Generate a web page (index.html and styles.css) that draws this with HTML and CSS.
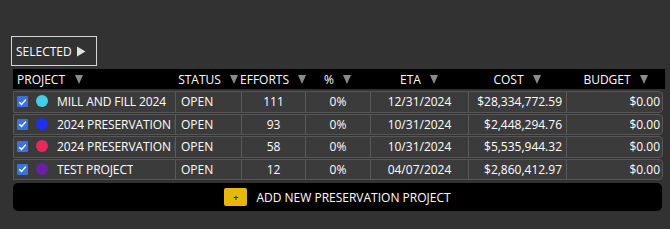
FILE: index.html
```html
<!DOCTYPE html>
<html lang="en">
<head>
  <meta charset="UTF-8">
  <meta name="viewport" content="width=device-width, initial-scale=1.0">
  <title>Preservation Projects</title>
  <link rel="stylesheet" href="styles.css">
</head>
<body>

<div class="page">
  <button class="selected-btn">SELECTED
    <svg width="10" height="11" viewBox="0 0 10 11"><path d="M1 0.5 L9.5 5.5 L1 10.5 Z" fill="#e2e2e2"/></svg>
  </button>

  <div class="grid-head">
    <div class="hcell left">PROJECT <span class="arrow"></span></div>
    <div class="hcell">STATUS <span class="arrow"></span></div>
    <div class="hcell">EFFORTS <span class="arrow"></span></div>
    <div class="hcell">% <span class="arrow"></span></div>
    <div class="hcell">ETA <span class="arrow"></span></div>
    <div class="hcell">COST <span class="arrow"></span></div>
    <div class="hcell">BUDGET <span class="arrow"></span></div>
  </div>

  <div class="grid-row">
    <div class="cell project"><span class="check"><svg width="12" height="12" viewBox="0 0 12 12"><path d="M2.5 6.2 L5 8.6 L9.6 3.4" stroke="#fff" stroke-width="1.6" fill="none"/></svg></span><span class="dot cyan"></span><span class="name">MILL AND FILL 2024</span></div>
    <div class="cell">OPEN</div>
    <div class="cell center">111</div>
    <div class="cell center">0%</div>
    <div class="cell center">12/31/2024</div>
    <div class="cell right">$28,334,772.59</div>
    <div class="cell right">$0.00</div>
  </div>

  <div class="grid-row">
    <div class="cell project"><span class="check"><svg width="12" height="12" viewBox="0 0 12 12"><path d="M2.5 6.2 L5 8.6 L9.6 3.4" stroke="#fff" stroke-width="1.6" fill="none"/></svg></span><span class="dot blue"></span><span class="name">2024 PRESERVATION PROJECT</span></div>
    <div class="cell">OPEN</div>
    <div class="cell center">93</div>
    <div class="cell center">0%</div>
    <div class="cell center">10/31/2024</div>
    <div class="cell right">$2,448,294.76</div>
    <div class="cell right">$0.00</div>
  </div>

  <div class="grid-row">
    <div class="cell project"><span class="check"><svg width="12" height="12" viewBox="0 0 12 12"><path d="M2.5 6.2 L5 8.6 L9.6 3.4" stroke="#fff" stroke-width="1.6" fill="none"/></svg></span><span class="dot pink"></span><span class="name">2024 PRESERVATION PROJECT</span></div>
    <div class="cell">OPEN</div>
    <div class="cell center">58</div>
    <div class="cell center">0%</div>
    <div class="cell center">10/31/2024</div>
    <div class="cell right">$5,535,944.32</div>
    <div class="cell right">$0.00</div>
  </div>

  <div class="grid-row">
    <div class="cell project"><span class="check"><svg width="12" height="12" viewBox="0 0 12 12"><path d="M2.5 6.2 L5 8.6 L9.6 3.4" stroke="#fff" stroke-width="1.6" fill="none"/></svg></span><span class="dot purple"></span><span class="name">TEST PROJECT</span></div>
    <div class="cell">OPEN</div>
    <div class="cell center">12</div>
    <div class="cell center">0%</div>
    <div class="cell center">04/07/2024</div>
    <div class="cell right">$2,860,412.97</div>
    <div class="cell right">$0.00</div>
  </div>

  <button class="add-btn"><span class="plus">+</span>ADD NEW PRESERVATION PROJECT</button>
</div>

</body>
</html>
```

FILE: styles.css
```css
body {
  margin: 0;
  padding: 0;
  background-color: #323232;
  color: #fff;
  font-family: "Open Sans", Arial, sans-serif;
  font-size: 12px;
}
.page {
  padding: 36px 0 0 11px;
}
.selected-btn {
  display: flex;
  align-items: center;
  gap: 4px;
  box-sizing: border-box;
  width: 86px;
  height: 30px;
  padding: 0 0 0 4px;
  background: transparent;
  border: 1px solid #d6d6d6;
  color: #fff;
  font-family: inherit;
  font-size: 12px;
}
/* Cabecera de la tabla */
.grid-head {
  display: grid;
  grid-template-columns: 162px 66px 64px 65px 98px 98px 99px;
  width: 652px;
  height: 20px;
  margin: 3px 0 0 2px;
  background-color: #000;
}
.hcell {
  display: flex;
  align-items: center;
  justify-content: center;
  gap: 9px;
  white-space: nowrap;
}
.hcell.left {
  justify-content: flex-start;
  padding-left: 4px;
  gap: 10px;
}
.arrow {
  width: 0;
  height: 0;
  border-left: 4.5px solid transparent;
  border-right: 4.5px solid transparent;
  border-top: 9px solid #8a8a8a;
}
/* Filas */
.grid-row {
  display: grid;
  grid-template-columns: 162px 66px 64px 65px 98px 98px 97px;
  box-sizing: border-box;
  width: 650px;
  height: 21.5px;
  margin: 1px 0 0 2px;
  background-color: #3b3b3b;
  border: 1px solid #565656;
  border-radius: 0 4px 4px 0;
}
.grid-head + .grid-row {
  margin-top: 2px;
}
.cell {
  display: flex;
  align-items: center;
  padding: 0 5px;
  border-right: 1px solid #5a5a5a;
  white-space: nowrap;
  overflow: hidden;
}
.cell:last-child {
  border-right: none;
}
.cell.center {
  justify-content: center;
}
.cell.right {
  justify-content: flex-end;
  padding-right: 4px;
}
.cell.project {
  padding-left: 3px;
  padding-right: 0;
}
.check {
  display: flex;
  flex: none;
  width: 11px;
  height: 11px;
  margin-right: 8px;
  background-color: #3a72dc;
  border-radius: 1px;
  align-items: center;
  justify-content: center;
}
.dot {
  flex: none;
  width: 12px;
  height: 12px;
  border-radius: 50%;
  margin-right: 9px;
  margin-top: -1px;
}
.dot.cyan { background-color: #3fcfe6; }
.dot.blue { background-color: #1f2ff0; }
.dot.pink { background-color: #e8275c; }
.dot.purple { background-color: #6a1ea8; }
.name {
  min-width: 0;
  overflow: hidden;
  text-overflow: clip;
  letter-spacing: -0.1px;
}
.add-btn {
  display: flex;
  align-items: center;
  justify-content: center;
  gap: 9px;
  width: 649px;
  height: 28px;
  margin: 3px 0 0 2px;
  background-color: #000;
  border: none;
  border-radius: 5px;
  color: #fff;
  font-family: inherit;
  font-size: 12px;
  cursor: pointer;
}
.plus {
  display: flex;
  align-items: center;
  justify-content: center;
  width: 23px;
  height: 18px;
  background-color: #e6b80e;
  border-radius: 2px;
  color: #3a2a00;
  font-size: 9px;
  font-weight: bold;
}
```
